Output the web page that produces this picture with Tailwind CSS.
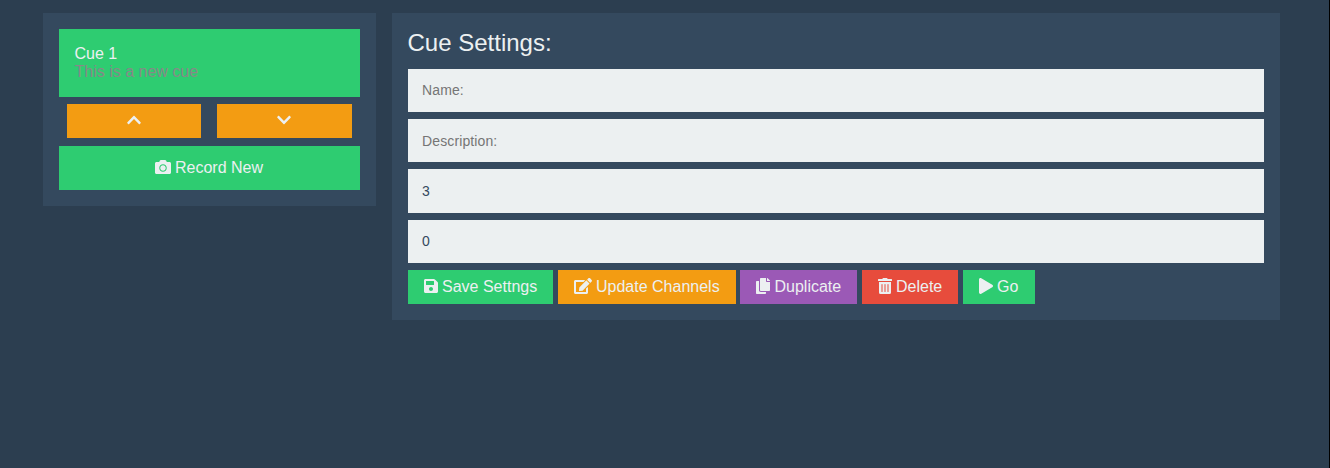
<!DOCTYPE html>
<html lang="en">
<head>
<meta charset="utf-8">
<title>Cue Settings</title>
<script src="https://cdn.jsdelivr.net/npm/@tailwindcss/browser@4"></script>
</head>
<body class="h-[468px] overflow-hidden border-r border-black bg-[#2c3e50] font-['Liberation_Sans',Arial,sans-serif] text-base leading-[18px] text-[#ecf0f1]">
<main class="flex items-start gap-4 pt-[13px] pl-[43px]">
  <section class="flex w-[333px] flex-col bg-[#34495e] p-4">
    <div class="h-[68px] bg-[#2ecc71] px-[15.5px] pt-4">
      <div>Cue 1</div>
      <div class="text-[#888888]">This is a new cue</div>
    </div>
    <div class="mt-[7px] flex gap-4 px-2">
      <button class="flex h-[34px] w-[134px] items-center justify-center bg-[#f39c12] pb-0.5" aria-label="Move up">
        <svg class="h-4 w-[14px]" viewBox="0 0 448 512" fill="currentColor"><path d="M240.971 130.524l194.343 194.343c9.373 9.373 9.373 24.569 0 33.941l-22.667 22.667c-9.357 9.357-24.522 9.375-33.901.04L224 227.495 69.255 381.516c-9.379 9.335-24.544 9.317-33.901-.04l-22.667-22.667c-9.373-9.373-9.373-24.569 0-33.941L207.03 130.525c9.372-9.373 24.568-9.373 33.941-.001z"/></svg>
      </button>
      <button class="flex h-[34px] w-[135px] items-center justify-center bg-[#f39c12] pr-px pb-0.5" aria-label="Move down">
        <svg class="h-4 w-[14px]" viewBox="0 0 448 512" fill="currentColor"><path d="M207.029 381.476L12.686 187.132c-9.373-9.373-9.373-24.569 0-33.941l22.667-22.667c9.357-9.357 24.522-9.375 33.901-.04L224 284.505l154.745-154.021c9.379-9.335 24.544-9.317 33.901.04l22.667 22.667c9.373 9.373 9.373 24.569 0 33.941L240.971 381.476c-9.373 9.372-24.569 9.372-33.942 0z"/></svg>
      </button>
    </div>
    <button class="mt-2 flex h-11 items-center justify-center gap-1 bg-[#2ecc71] pr-px">
      <svg class="mb-0.5 size-4" viewBox="0 0 512 512" fill="currentColor"><path d="M512 144v288c0 26.5-21.5 48-48 48H48c-26.5 0-48-21.5-48-48V144c0-26.5 21.5-48 48-48h88l12.3-32.9c7-18.7 24.9-31.1 44.9-31.1h125.5c20 0 37.9 12.4 44.9 31.1L376 96h88c26.5 0 48 21.5 48 48zM376 288c0-66.2-53.8-120-120-120s-120 53.8-120 120 53.8 120 120 120 120-53.8 120-120zm-32 0c0 48.5-39.5 88-88 88s-88-39.5-88-88 39.5-88 88-88 88 39.5 88 88z"/></svg>
      <span>Record New</span>
    </button>
  </section>

  <section class="h-[307px] w-[888px] bg-[#34495e] px-4 pt-4">
    <h1 class="-ml-[0.5px] h-10 text-2xl leading-[28px]">Cue Settings:</h1>
    <div class="flex flex-col gap-[7px] text-sm text-[#34495e]">
      <input class="h-[43px] bg-[#ecf0f1] px-[14px] pb-0.5 placeholder:tracking-[0.12px] placeholder:text-[#757575]" placeholder="Name:">
      <input class="h-[43px] bg-[#ecf0f1] px-[14px] placeholder:tracking-[0.12px] placeholder:text-[#757575]" placeholder="Description:">
      <input class="h-11 bg-[#ecf0f1] px-[14px]" value="3">
      <input class="h-[43px] bg-[#ecf0f1] px-[14px] pb-0.5" value="0">
    </div>
    <div class="mt-[7px] flex gap-[5px] whitespace-nowrap">
      <button class="flex h-[34px] w-[145px] items-center gap-1 bg-[#2ecc71] pl-4">
        <svg class="mb-0.5 h-4 w-[14px]" viewBox="0 0 448 512" fill="currentColor"><path d="M433.941 129.941l-83.882-83.882A48 48 0 0 0 316.118 32H48C21.49 32 0 53.49 0 80v352c0 26.51 21.49 48 48 48h352c26.51 0 48-21.49 48-48V163.882a48 48 0 0 0-14.059-33.941zM224 416c-35.346 0-64-28.654-64-64 0-35.346 28.654-64 64-64s64 28.654 64 64c0 35.346-28.654 64-64 64zm96-304.52V212c0 6.627-5.373 12-12 12H76c-6.627 0-12-5.373-12-12V108c0-6.627 5.373-12 12-12h228.52c3.183 0 6.235 1.264 8.485 3.515l3.48 3.48A11.996 11.996 0 0 1 320 111.48z"/></svg>
        <span>Save Settngs</span>
      </button>
      <button class="flex h-[34px] w-[178px] items-center gap-1 bg-[#f39c12] pl-4">
        <svg class="mb-0.5 h-4 w-[18px]" viewBox="0 0 576 512" fill="currentColor"><path d="M402.6 83.2l90.2 90.2c3.8 3.8 3.8 10 0 13.8L274.4 405.6l-92.8 10.3c-12.4 1.4-22.9-9.1-21.5-21.5l10.3-92.8L388.8 83.2c3.8-3.8 10-3.8 13.8 0zm162-22.9l-48.8-48.8c-15.2-15.2-39.9-15.2-55.2 0l-35.4 35.4c-3.8 3.8-3.8 10 0 13.8l90.2 90.2c3.8 3.8 10 3.8 13.8 0l35.4-35.4c15.2-15.3 15.2-40 0-55.2zM384 346.2V448H64V128h229.8c3.2 0 6.2-1.3 8.5-3.5l40-40c7.6-7.6 2.2-20.5-8.5-20.5H48C21.5 64 0 85.5 0 112v352c0 26.5 21.5 48 48 48h352c26.5 0 48-21.5 48-48V306.2c0-10.7-12.9-16-20.5-8.5l-40 40c-2.2 2.3-3.5 5.3-3.5 8.5z"/></svg>
        <span>Update Channels</span>
      </button>
      <button class="-ml-px flex h-[34px] w-[117px] items-center gap-1 bg-[#9b59b6] pl-4">
        <svg class="mb-0.5 h-4 w-[14px]" viewBox="0 0 448 512" fill="currentColor"><path d="M320 448v40c0 13.255-10.745 24-24 24H24c-13.255 0-24-10.745-24-24V120c0-13.255 10.745-24 24-24h72v296c0 30.879 25.121 56 56 56h168zm0-344V0H152c-13.255 0-24 10.745-24 24v368c0 13.255 10.745 24 24 24h272c13.255 0 24-10.745 24-24V128H344c-13.2 0-24-10.8-24-24zm120.971-31.029L375.029 7.029A24 24 0 0 0 358.059 0H352v96h96v-6.059a24 24 0 0 0-7.029-16.97z"/></svg>
        <span class="ml-[0.5px]">Duplicate</span>
      </button>
      <button class="flex h-[34px] w-24 items-center gap-1 bg-[#e74c3c] pl-4">
        <svg class="mb-0.5 h-4 w-[14px]" viewBox="0 0 448 512" fill="currentColor"><path d="M32 464a48 48 0 0 0 48 48h288a48 48 0 0 0 48-48V128H32zm272-256a16 16 0 0 1 32 0v224a16 16 0 0 1-32 0zm-96 0a16 16 0 0 1 32 0v224a16 16 0 0 1-32 0zm-96 0a16 16 0 0 1 32 0v224a16 16 0 0 1-32 0zM432 32H312l-9.4-18.7A24 24 0 0 0 281.1 0H166.8a23.72 23.72 0 0 0-21.4 13.3L136 32H16A16 16 0 0 0 0 48v32a16 16 0 0 0 16 16h416a16 16 0 0 0 16-16V48a16 16 0 0 0-16-16z"/></svg>
        <span>Delete</span>
      </button>
      <button class="flex h-[34px] w-[72px] items-center gap-1 bg-[#2ecc71] pl-4">
        <svg class="mb-0.5 h-4 w-[14px]" viewBox="0 0 448 512" fill="currentColor"><path d="M424.4 214.7L72.4 6.6C43.8-10.3 0 6.1 0 47.9V464c0 37.5 40.7 60.1 72.4 41.3l352-208c31.4-18.5 31.5-64.1 0-82.6z"/></svg>
        <span>Go</span>
      </button>
    </div>
  </section>
</main>
</body>
</html>
